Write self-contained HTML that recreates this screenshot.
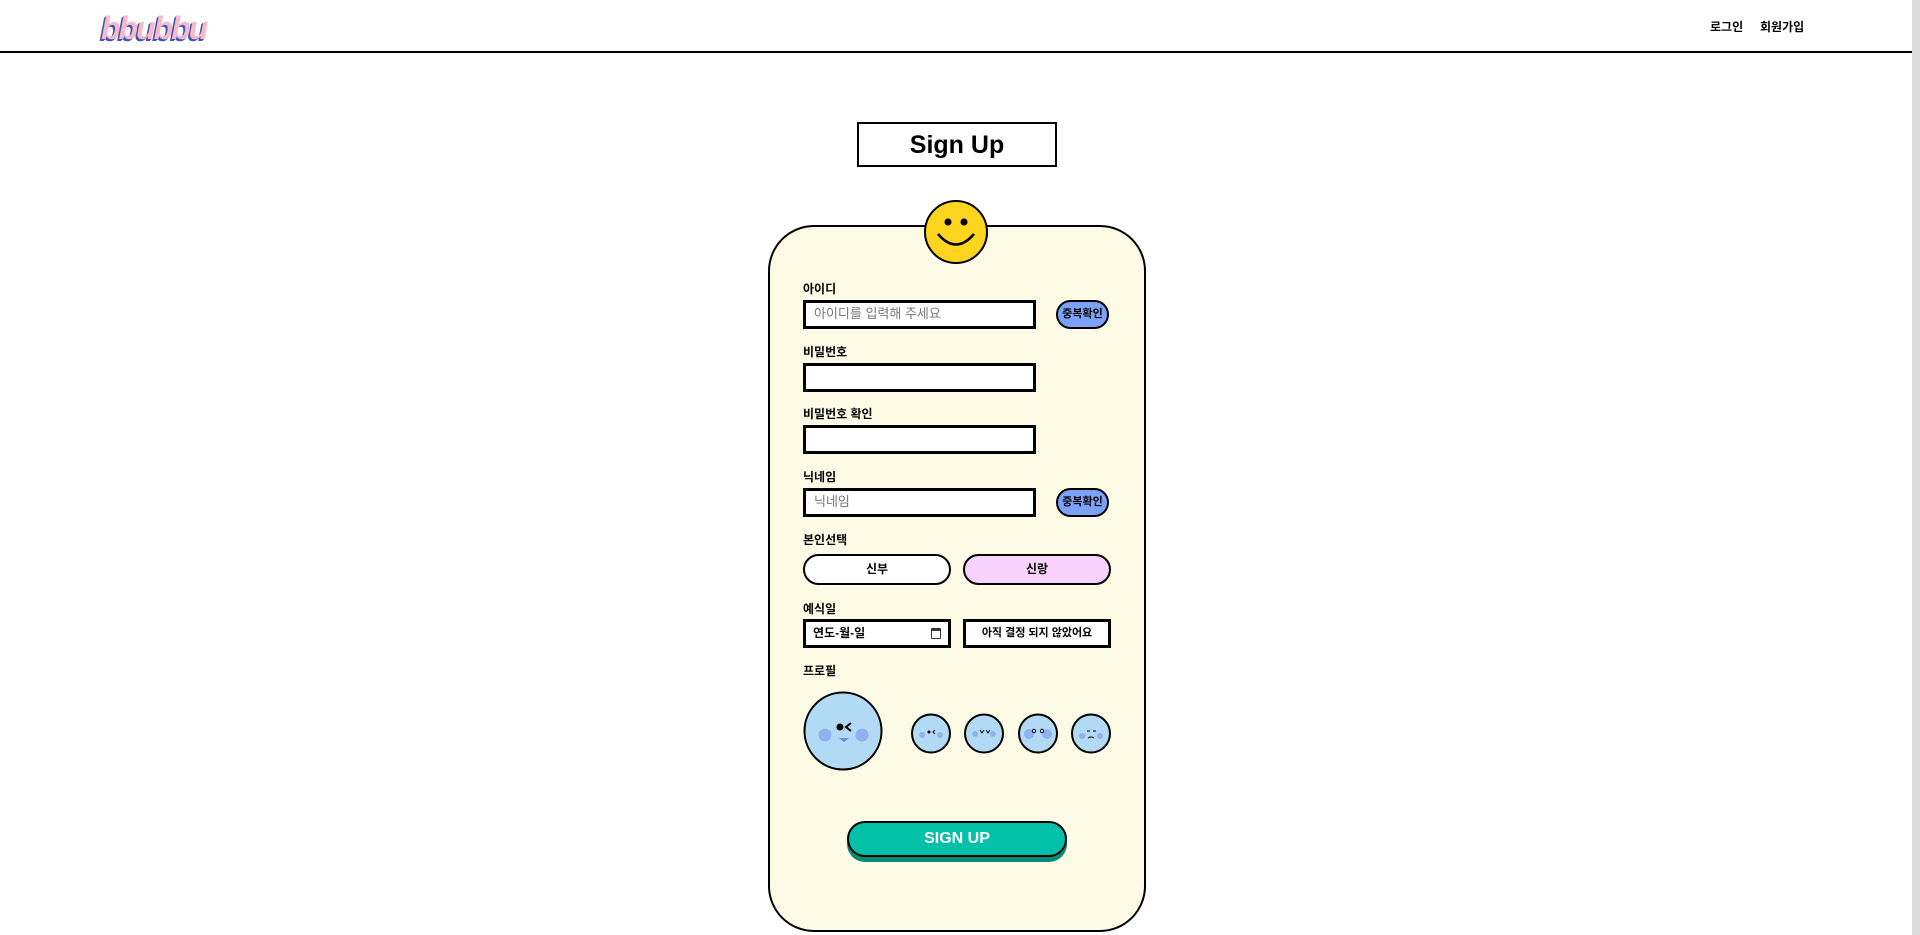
<!DOCTYPE html>
<html><head><meta charset="utf-8"><style>
*{box-sizing:border-box;margin:0;padding:0}
body{width:1920px;height:935px;overflow:hidden;background:#fff;font-family:"Liberation Sans","Noto Sans CJK KR",sans-serif;position:relative;color:#000}
.a{position:absolute}
.hdr{left:0;top:51px;width:1912px;height:2px;background:#000}
.sb{left:1912px;top:0;width:8px;height:935px;background:#dcdcdc}
.logo{left:101px;top:10px;font:italic bold 32px "Liberation Sans",sans-serif;color:#f8b9c8;text-shadow:-2px 2px 0 #3f55b8,-1px 1px 0 #3f55b8;letter-spacing:-2px}
.nav{top:18px;font-size:12px;font-weight:bold}
.title{left:857px;top:122px;width:200px;height:45px;border:2px solid #000;text-align:center;font-size:25px;font-weight:bold;line-height:43px}
.card{left:768px;top:225px;width:378px;height:707px;border:2px solid #000;border-radius:46px;background:#fdfae6}
.lbl{font-size:12px;font-weight:bold;left:803px}
.inp{left:803px;width:233px;height:29px;border:3px solid #000;background:#fff;font-size:13px;color:#777;padding-left:8px;line-height:22px}
.dup{left:1056px;width:53px;height:29px;border:2px solid #000;border-radius:15px;background:#7ba2f8;font-size:11px;font-weight:bold;text-align:center;line-height:25px}
.pill{top:554px;width:148px;height:31px;border:2px solid #000;border-radius:16px;text-align:center;font-size:12px;font-weight:bold;line-height:27px}
.box{top:619px;width:148px;height:29px;border:3px solid #000;background:#fff;font-size:11px;font-weight:bold;line-height:23px}
</style></head><body>
<div class="a logo">bbubbu</div>
<div class="a nav" style="left:1710px">로그인</div>
<div class="a nav" style="left:1760px">회원가입</div>
<div class="a hdr"></div>
<div class="a sb"></div>
<div class="a title">Sign Up</div>
<div class="a card"></div>
<svg class="a" style="left:923px;top:199px" width="66" height="66" viewBox="0 0 66 66"><circle cx="33" cy="33" r="31" fill="#fdd51f" stroke="#000" stroke-width="2"/><circle cx="25" cy="23" r="3.5"/><circle cx="41" cy="23" r="3.5"/><path d="M15 35 Q33 56 51 35" fill="none" stroke="#000" stroke-width="2.5"/></svg>
<div class="a lbl" style="top:280px">아이디</div>
<div class="a inp" style="top:300px">아이디를 입력해 주세요</div>
<div class="a dup" style="top:300px">중복확인</div>
<div class="a lbl" style="top:343px">비밀번호</div>
<div class="a inp" style="top:363px"></div>
<div class="a lbl" style="top:405px">비밀번호 확인</div>
<div class="a inp" style="top:425px"></div>
<div class="a lbl" style="top:468px">닉네임</div>
<div class="a inp" style="top:488px">닉네임</div>
<div class="a dup" style="top:488px">중복확인</div>
<div class="a lbl" style="top:531px">본인선택</div>
<div class="a pill" style="left:803px;background:#fff">신부</div>
<div class="a pill" style="left:963px;background:#f7d2fc">신랑</div>
<div class="a lbl" style="top:600px">예식일</div>
<div class="a box" style="left:803px;padding-left:7px;font-size:12px">연도-월-일<span style="position:absolute;right:7px;top:6px;width:10px;height:11px;border:1.5px solid #333;border-top-width:3px;border-radius:1px"></span></div>
<div class="a box" style="left:963px;text-align:center">아직 결정 되지 않았어요</div>
<div class="a lbl" style="top:662px">프로필</div>
<svg class="a" style="left:803px;top:691px" width="80" height="80" viewBox="0 0 80 80"><circle cx="40" cy="40" r="38.5" fill="#b3daf5" stroke="#000" stroke-width="2"/><circle cx="22" cy="44" r="6.5" fill="#8fb1f0"/><circle cx="59" cy="44" r="6.5" fill="#8fb1f0"/><circle cx="37" cy="36" r="3.5"/><path d="M48 32 l-5 4 l5 4" fill="none" stroke="#000" stroke-width="2"/><path d="M36 47 h10 l-5 4z" fill="#5c8fe8"/></svg>
<svg class="a" style="left:911px;top:713px" width="200" height="41" viewBox="0 0 200 41">
<g stroke="#000" stroke-width="2" fill="#b3daf5"><circle cx="20" cy="20.5" r="19"/><circle cx="73" cy="20.5" r="19"/><circle cx="127" cy="20.5" r="19"/><circle cx="180" cy="20.5" r="19"/></g>
<g fill="#8fb1f0"><circle cx="11" cy="22" r="3"/><circle cx="29" cy="22" r="3"/><circle cx="64" cy="21" r="3"/><circle cx="82" cy="21" r="3"/><circle cx="118" cy="21" r="5"/><circle cx="136" cy="21" r="5"/><circle cx="171" cy="23" r="3"/><circle cx="189" cy="23" r="3"/></g>
<circle cx="18" cy="19" r="1.5"/><path d="M24 17 l-2 2 l2 2" fill="none" stroke="#000"/>
<path d="M69 17 l2 3 l2-3 M75 17 l2 3 l2-3" fill="none" stroke="#000"/>
<circle cx="123" cy="18" r="1.7" fill="none" stroke="#000"/><circle cx="131" cy="18" r="1.7" fill="none" stroke="#000"/>
<path d="M176 18 h3 M182 18 h3 M177 25 q3-2 6 0" fill="none" stroke="#000"/>
</svg>
<div class="a" style="left:847px;top:826px;width:220px;height:36px;border-radius:18px;background:#078a77"></div>
<div class="a" style="left:847px;top:821px;width:220px;height:36px;border:2px solid #000;border-radius:18px;background:#03c1a9;color:#fff;font-size:16px;font-weight:bold;text-align:center;line-height:32px">SIGN UP</div>
</body></html>
